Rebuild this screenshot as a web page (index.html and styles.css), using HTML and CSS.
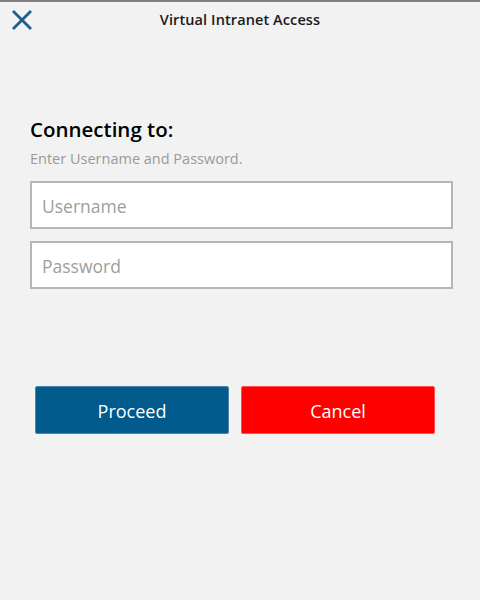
FILE: index.html
```html
<!DOCTYPE html>
<html lang="en">

<head>
    <meta charset="UTF-8">
    <meta name="viewport" content="width=device-width, initial-scale=1.0">
    <title>Virtual Intranet Access</title>
    <link rel="stylesheet" href="styles.css">
</head>

<body>
    <header class="topbar">
        <button class="close" aria-label="close">
            <svg width="20" height="20" viewBox="0 0 20 20">
                <path d="M2 2 L18 18 M18 2 L2 18" stroke="#1c5f8d" stroke-width="2.8" stroke-linecap="square" fill="none" />
            </svg>
        </button>
        <h1 class="title">Virtual Intranet Access</h1>
    </header>

    <main class="login">
        <h2>Connecting to:</h2>
        <p class="hint">Enter Username and Password.</p>
        <input type="text" class="field" placeholder="Username">
        <input type="password" class="field" placeholder="Password">

        <div class="actions">
            <button class="btn proceed">Proceed</button>
            <button class="btn cancel">Cancel</button>
        </div>
    </main>
</body>

</html>
```

FILE: styles.css
```css
body {
    margin: 0;
    padding: 0;
    height: 600px;
    background-color: #f2f2f2;
    border-top: 2px solid #808080;
    box-sizing: border-box;
    font-family: "Open Sans", "Noto Sans", sans-serif;
    overflow: hidden;
}

.topbar {
    position: relative;
    height: 34px;
    display: flex;
    align-items: center;
    justify-content: center;
}

.close {
    position: absolute;
    left: 10px;
    top: 6px;
    background: none;
    border: none;
    padding: 0;
    width: 24px;
    height: 24px;
    display: flex;
    align-items: center;
    justify-content: center;
}

.title {
    margin: 0;
    font-size: 14.5px;
    font-weight: 600;
    color: #1a1a1a;
    letter-spacing: 0.1px;
}

.login {
    padding: 80px 27px 0 30px;
    display: flex;
    flex-direction: column;
}

.login h2 {
    margin: 0;
    font-size: 20.5px;
    font-weight: 600;
    color: #000;
    line-height: 26px;
}

.hint {
    margin: 8px 0 13px;
    font-size: 14.5px;
    color: #9a9a9a;
    line-height: 18px;
}

.field {
    height: 48px;
    margin-bottom: 12px;
    border: 2px solid #b5b5bc;
    background: #fff;
    padding: 1px 10px 0;
    font-family: inherit;
    font-size: 17.5px;
    box-sizing: border-box;
    outline: none;
}

.field::placeholder {
    color: #9e9e9e;
}

.actions {
    display: flex;
    gap: 12px;
    margin-top: 85px;
    padding-left: 5px;
    padding-right: 18px;
}

.btn {
    flex: 1;
    height: 48px;
    padding-top: 3px;
    border-radius: 2px;
    font-family: inherit;
    font-size: 18px;
    color: #fff;
}

.proceed {
    background-color: #005a8c;
    border: 1px solid #4a86ad;
}

.cancel {
    background-color: #ff0000;
    border: 1px solid #ff5050;
}
```
